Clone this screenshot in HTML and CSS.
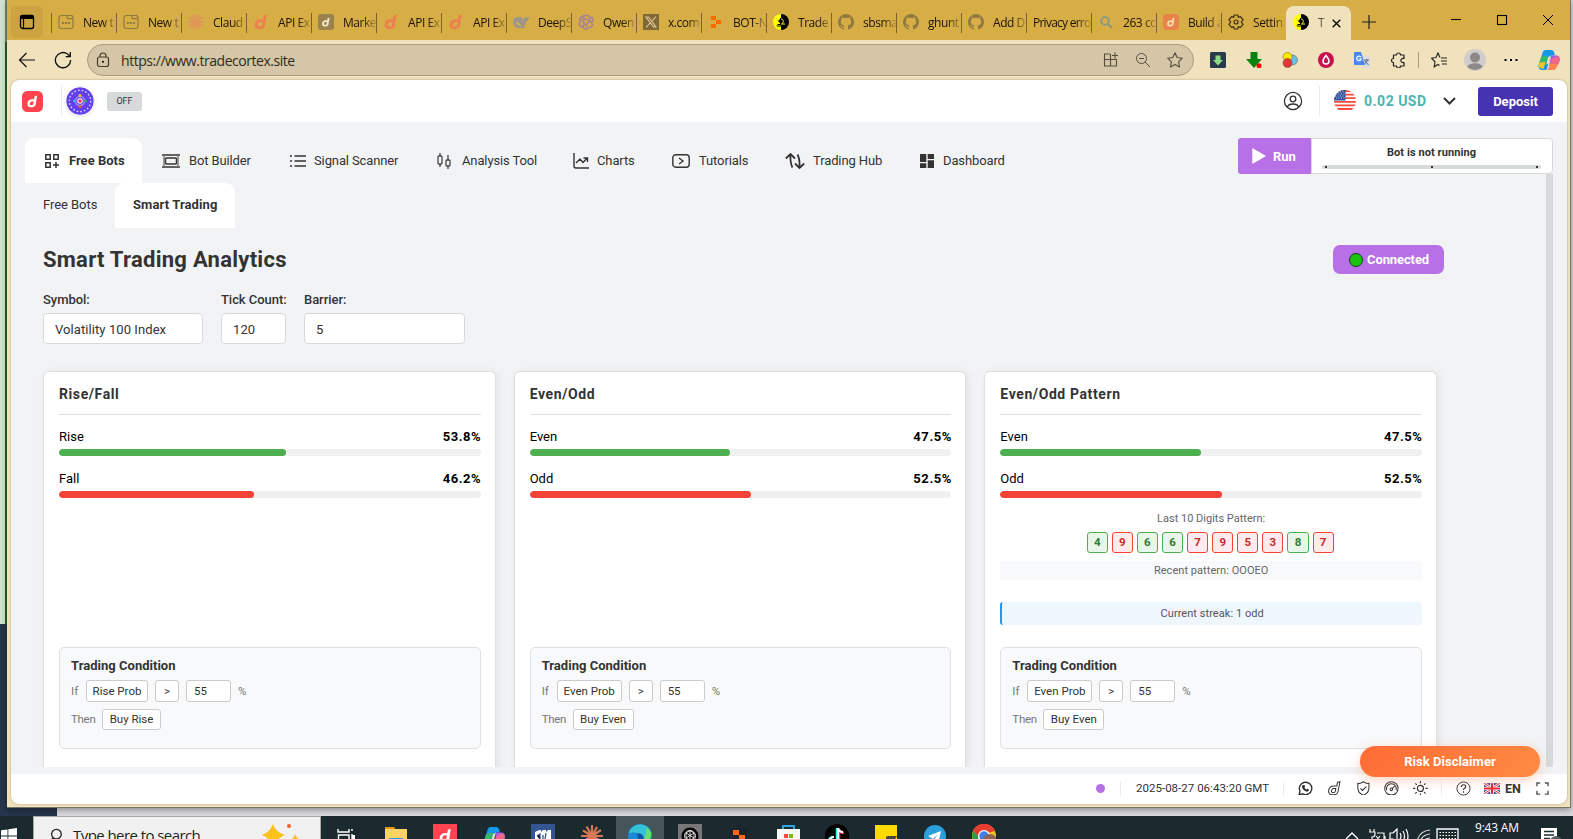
FILE: index.html
```html
<!DOCTYPE html>
<html lang="en">
<head>
<meta charset="utf-8">
<title>Smart Trading Analytics</title>
<link rel="stylesheet" href="styles.css">
</head>
<body>
<svg class="sprite" aria-hidden="true">
  <symbol id="deriv" viewBox="0 0 16 16"><path d="M13.6 1 10.6 1.6 10 5.2H7.4C4.4 5.2 2.2 7.2 1.8 10c-.4 2.800 1 5 3.500 5h2.300c2.400 0 4.100-1.400 4.500-3.800zM9 11c-.2 1-.7 1.400-1.600 1.400H6.100c-1 0-1.500-.8-1.300-2 .2-1.300 1-2.300 2.200-2.300h2.500z"/></symbol>
  <symbol id="page" viewBox="0 0 16 16"><path fill="none" stroke="currentColor" stroke-width="1.2" d="M4 1.500h8.500A2.200 2.200 0 0 1 15 3.800v8.400a2.200 2.200 0 0 1-2.300 2.300H3.300A2.200 2.200 0 0 1 1 12.200V3.800a2.200 2.200 0 0 1 2.200-2.300zM9 1.500v2q0 1.200 1.200 1.200H15"/><path fill="currentColor" d="M4 8h2v2H4zm3 0h2v2H7zm3 0h2v2h-2z"/></symbol>
  <symbol id="burst" viewBox="0 0 24 24"><path stroke="currentColor" stroke-width="2.400" stroke-linecap="round" d="M12 12V1M12 12l5-9M12 12l9-6M12 12l11 0M12 12l9 5M12 12l5 9M12 12v11M12 12l-5.500 9M12 12l-9 5.500M12 12H1M12 12 3 6.500M12 12 6.500 2.500"/></symbol>
  <symbol id="github" viewBox="0 0 16 16"><path fill="currentColor" d="M8 0a8 8 0 0 0-2.530 15.590c.4.070.55-.17.55-.38v-1.490c-2.230.48-2.700-.94-2.700-.94-.36-.92-.89-1.170-.89-1.170-.73-.5.050-.49.050-.49.810.06 1.230.83 1.230.83.72 1.230 1.880.87 2.340.67.070-.52.280-.88.510-1.080-1.780-.2-3.640-.89-3.640-3.950 0-.87.310-1.590.82-2.150-.08-.2-.36-1.020.08-2.120 0 0 .67-.21 2.200.82a7.600 7.600 0 0 1 4 0c1.530-1.040 2.200-.82 2.200-.82.440 1.100.160 1.920.08 2.120.510.56.820 1.270.820 2.150 0 3.070-1.870 3.750-3.650 3.950.290.250.540.730.540 1.480v2.190c0 .210.150.460.550.380A8 8 0 0 0 8 0z"/></symbol>
  <symbol id="cortex" viewBox="0 0 16 16"><path fill="#ff0" d="M8 0a8 8 0 0 0 0 16z"/><path d="M8 0a8 8 0 0 1 0 16z"/><path d="M7 4h1v7H4.500v-1H7zM3.500 11.500H8v1H4zM5 7l2-2v4z"/><path fill="none" stroke="#ff0" d="M8 5c3 0 3 4 .5 5H12"/></symbol>
  <symbol id="copilot" viewBox="0 0 24 24"><path fill="#1597e8" d="M8 1h6.500c2 0 2.600 1.300 3.200 3l.8 3h-4L12 14l-2 7c-.5 1.600-1.500 2-3 2H5c-4 0-5-3-4-6L5 4c.6-2 1.400-3 3-3z"/><path fill="#35b86c" d="M3.500 9 7 7.500h4L8 18l-7.500.5c0-2 2-7 3-9.500z"/><path fill="#f7c325" d="m1 15 7-1-2 8-3-1c-2-1-2.500-3-2-6z"/><path fill="#a65be8" d="M14.500 7H20c3.500 0 4.500 3 3.500 6L20 20c-.7 2-2 3-4 3H9c1.500 0 2.300-1 2.800-2.500z"/><path fill="#f4658a" d="M20.500 8c3 .5 3.800 3 2.800 6l-1.200 3h-9L15 11z"/><path fill="#ff8a4a" d="m13 16 9 1-2 3c-.7 2-2 3-4 3H9c1.500 0 2.300-1 2.800-2.500z"/><path fill="#f1e2bd" d="m11 9 3-2-2.500 9-2.500 1z"/></symbol>
  <symbol id="uk" viewBox="0 0 30 20"><path fill="#2f3f96" d="M0 0h30v20H0z"/><path stroke="#fff" stroke-width="5" d="m0 0 30 20M30 0 0 20"/><path stroke="#e8404f" stroke-width="2" d="m0 0 30 20M30 0 0 20"/><path stroke="#fff" stroke-width="7" d="M15 0v20M0 10h30"/><path stroke="#e02b3c" stroke-width="4" d="M15 0v20M0 10h30"/></symbol>
</svg>

<div class="desktop">
  <div class="backdrop"></div>
  <div class="window">
    <div class="tabstrip">
      <div class="workspace"><svg width="16" height="16" viewBox="0 0 16 16"><rect x="1.500" y="1.500" width="13" height="13" rx="2" fill="none" stroke="#000" stroke-width="1.300"/><path d="M1 3q0-2 2-2h10q2 0 2 2v2H1z"/><path d="M4.500 5v9.500" stroke="#000" stroke-width="1.200"/></svg></div>
      <div class="tab"><svg class="fav olive"><use href="#page"/></svg><span>New t</span></div>
      <div class="tab"><svg class="fav olive"><use href="#page"/></svg><span>New t</span></div>
      <div class="tab"><svg class="fav peach"><use href="#burst"/></svg><span>Claud</span></div>
      <div class="tab"><svg class="fav coral"><use href="#deriv"/></svg><span>API Ex</span></div>
      <div class="tab"><svg class="fav" viewBox="0 0 16 16"><rect width="16" height="16" rx="3" fill="#99824b"/><use href="#deriv" x="3" y="3" width="10" height="10" fill="#f5e8cb"/></svg><span>Marke</span></div>
      <div class="tab"><svg class="fav coral"><use href="#deriv"/></svg><span>API Ex</span></div>
      <div class="tab"><svg class="fav coral"><use href="#deriv"/></svg><span>API Ex</span></div>
      <div class="tab"><svg class="fav" viewBox="0 0 16 16"><path fill="#9c948d" d="M0 8c0-4 3-5.500 6-5 2-1 3 1 5 3 .3-1 1-2 .3-3.500C13 4 14 4 16 3c0 3-1 4-3 4.500-.5 3-1.500 4-2.500 5l2 1c-2 1-4 .5-5 .5C3 14 0 12 0 8z"/><path fill="#d8ad47" d="M3 8c3 0 4 2 6 4-3 0-5-1-6-4zm5-2q2 0 2 2L8 7z"/></svg><span>DeepS</span></div>
      <div class="tab"><svg class="fav" viewBox="0 0 16 16"><path fill="none" stroke="#a98393" stroke-width="1.600" d="M5 1.500h5.500l1 2H14L15 6l-1.500 2.500L14.500 11 13 13.500h-2.500L9 15H6.500L5 12.500H2.500L1 10l1.500-2.500L1.500 5 3 3h2.500zM4 5.500h8L8 12zM5 2l2 3.500M14 8l-3-.5M5 12.500 6 9"/></svg><span>Qwen</span></div>
      <div class="tab"><svg class="fav" viewBox="0 0 16 16"><path fill="#806936" d="M0 0h16v16H0z"/><path fill="none" stroke="#e5cf99" stroke-width="1.100" d="M3 3h2.500L13 13h-2.500zM13 2.500 9 7M7 9l-4 4.500"/></svg><span>x.com</span></div>
      <div class="tab"><svg class="fav" viewBox="0 0 16 16"><path fill="#ff6a00" d="M3 2h5v4H3zm5 4h5v4H8zM3 10h5v4H3z"/></svg><span>BOT-N</span></div>
      <div class="tab"><svg class="fav"><use href="#cortex"/></svg><span>Trade</span></div>
      <div class="tab"><svg class="fav olive"><use href="#github"/></svg><span>sbsma</span></div>
      <div class="tab"><svg class="fav olive"><use href="#github"/></svg><span>ghunt</span></div>
      <div class="tab"><svg class="fav olive"><use href="#github"/></svg><span>Add D</span></div>
      <div class="tab bare"><span>Privacy erro</span></div>
      <div class="tab"><svg class="fav" viewBox="0 0 16 16"><circle cx="7" cy="7" r="3.800" fill="none" stroke="#7e9b84" stroke-width="1.800"/><path d="m10 10 4 4" stroke="#7e9b84" stroke-width="2"/></svg><span>263 cc</span></div>
      <div class="tab"><svg class="fav" viewBox="0 0 16 16"><rect width="16" height="16" rx="4" fill="#e98349"/><use href="#deriv" x="3" y="3" width="10" height="10" fill="#f6dcae"/></svg><span>Build a</span></div>
      <div class="tab"><svg class="fav" viewBox="0 0 16 16"><path fill="none" stroke="#3a2f12" stroke-width="1.200" d="M6.300 1h3.400l.6 2.200 2.200-.6L15 5.500 13.400 8 15 10.500l-2.500 2.900-2.200-.6-.6 2.200H6.300l-.6-2.200-2.200.6L1 10.500 2.600 8 1 5.500l2.500-2.900 2.200.6z"/><circle cx="8" cy="8" r="2" fill="none" stroke="#3a2f12" stroke-width="1.200"/></svg><span>Settin</span></div>
      <div class="tab current"><svg class="fav"><use href="#cortex"/></svg><span>T</span><svg class="close" viewBox="0 0 9 9"><path d="m.7.7 7.600 7.600m0-7.600L.7 8.300" stroke="#000" stroke-width="1.300"/></svg></div>
      <svg class="plus" viewBox="0 0 14 14"><path d="M7 0v14M0 7h14" stroke="#222" stroke-width="1.200"/></svg>
      <div class="winctl">
        <svg viewBox="0 0 12 12"><path d="M1 5.500h10" stroke="#000" stroke-width="1.100"/></svg>
        <svg viewBox="0 0 12 12"><rect x="1.500" y="1.500" width="9" height="9" fill="none" stroke="#000" stroke-width="1.100"/></svg>
        <svg viewBox="0 0 12 12"><path d="m1 1 10 10M11 1 1 11" stroke="#000"/></svg>
      </div>
    </div>

    <div class="toolbar">
      <svg class="back" viewBox="0 0 18 16"><path fill="none" stroke="#111" stroke-width="1.200" d="M17 8H1.500M8.500 1l-7 7 7 7"/></svg>
      <svg class="reload" viewBox="0 0 18 18"><path fill="none" stroke="#111" stroke-width="1.300" d="M16.600 9A7.600 7.600 0 1 1 13.500 3l2.500 2.300M16.300 1v4.700h-4.600"/></svg>
      <div class="url">
        <svg class="lock" viewBox="0 0 14 16"><rect x="1.500" y="5" width="11" height="9.500" rx="2" fill="none" stroke="#443c2d" stroke-width="1.200"/><path fill="none" stroke="#443c2d" stroke-width="1.200" d="M4 5V4q0-3 3-3t3 3v1"/><circle cx="7" cy="9.700" r="1"/></svg>
        <span class="address">https://www.tradecortex.site</span>
        <svg viewBox="0 0 16 16"><path fill="none" stroke="#554d3d" stroke-width="1.100" d="M7 2H1.500v5.500H13.500V14H1.500V8M7.500 2v12M12 .500v6M9 3.500h6"/></svg>
        <svg viewBox="0 0 16 16"><circle cx="6.500" cy="6.500" r="5" fill="none" stroke="#554d3d"/><path fill="none" stroke="#554d3d" d="m10 10 5 5M4 6.500h5"/></svg>
        <svg viewBox="0 0 16 16"><path fill="none" stroke="#554d3d" stroke-width="1.100" stroke-linejoin="round" d="m8 .8 2.200 4.700 5.100.7-3.700 3.600.9 5.100L8 12.500l-4.500 2.400.9-5.100L.7 6.200l5.100-.7z"/></svg>
      </div>
      <div class="exts">
        <svg viewBox="0 0 16 16"><rect width="16" height="16" rx="1.500" fill="#273b4d"/><path fill="#8fdc86" d="M5.500 3.500h5V8H13l-5 5.500L3 8h2.500z"/></svg>
        <svg viewBox="0 0 16 16"><path fill="#0b8210" d="M4.500 0h7v7H16l-8 9-8-9h4.500z"/><circle cx="13" cy="13.700" r="2.500" fill="red"/></svg>
        <svg viewBox="0 0 16 16"><circle cx="10.500" cy="8" r="5" fill="#64c1ef" stroke="#6b6b6b" stroke-width=".6"/><circle cx="5.500" cy="5" r="4.500" fill="#ffec00" stroke="#8a6d1c" stroke-width=".6"/><circle cx="5.500" cy="11" r="4.500" fill="#e0363c" stroke="#7c4a2c" stroke-width=".6"/></svg>
        <svg viewBox="0 0 16 16"><circle cx="8" cy="8" r="8" fill="#c8124d"/><path fill="none" stroke="#fff" stroke-width="1.500" d="M8 3.500c2 2.500 3 4 3 5.500a3 3 0 0 1-6 0c0-1.500 1-3 3-5.500z"/></svg>
        <svg viewBox="0 0 16 16"><path fill="#dcdcdc" d="M6 4h9q1 0 1 1v10q0 1-1 1H9z"/><path fill="#4a86f0" d="M1 0h6l4 13H1q-1 0-1-1V1q0-1 1-1z"/><path fill="none" stroke="#fff" stroke-width="1.200" d="M7 5.300A2.300 2.300 0 1 0 7.200 7H5"/><path fill="none" stroke="#5b6d80" d="M10 8h5m-2.500-1v1M11 9l3.500 4M14 8l-3.500 4"/></svg>
        <svg viewBox="0 0 16 16"><path fill="none" stroke="#222" stroke-width="1.200" stroke-linejoin="round" d="M4 3h2.500a2 2 0 1 1 4 0H14v3.500a2.200 2.200 0 1 0 0 4V14h-3.500a2 2 0 0 1-4 0H3.500v-3.500a2 2 0 1 1 0-4V3z"/></svg>
        <i class="bar"></i>
        <svg viewBox="0 0 16 16"><path fill="none" stroke="#222" stroke-width="1.100" d="M9 5.500 7 1 5 5.500.5 6.200 4 9.800l-.8 5L7 12.500l1.500 1M10 6h6m-6 3h6m-5 3h5"/></svg>
        <svg class="avatar" viewBox="0 0 22 22"><circle cx="11" cy="11" r="11" fill="#cfcccb"/><circle cx="11" cy="8.500" r="5" fill="#8c8988"/><path fill="#8c8988" d="M3.500 18c1-5 14-5 15 0a11 11 0 0 1-15 0z"/></svg>
        <svg viewBox="0 0 16 16"><path d="M1.500 7h2v2h-2zm5.500 0h2v2H7zm5.500 0h2v2h-2z"/></svg>
        <svg class="copilot"><use href="#copilot"/></svg>
      </div>
    </div>

    <div class="page">
      <header class="header">
        <svg class="brand" viewBox="0 0 21 21"><rect width="21" height="21" rx="5.500" fill="#ff444f"/><use href="#deriv" x="4" y="4" width="13" height="13" fill="#fff"/></svg>
        <i class="vline"></i>
        <svg class="emblem" viewBox="0 0 28 28"><circle cx="14" cy="14" r="13.700" fill="#6340ee"/><circle cx="14" cy="14" r="10.700" fill="none" stroke="#d9d0ff" stroke-width="1.400" stroke-dasharray="1.600 2.100"/><circle cx="14" cy="14" r="4.500" fill="none" stroke="#a48cff" stroke-width="1.500"/><circle cx="14" cy="14" r="2.700" fill="#fff"/><circle cx="14" cy="14" r="1.700" fill="#ee2457"/><circle cx="14" cy="8.500" r="1.500" fill="#f6c21c"/><circle cx="14" cy="19.500" r="1.500" fill="#ee5a3a"/><circle cx="8.500" cy="14" r="1.400" fill="#33b6f3"/><circle cx="19.500" cy="14" r="1.400" fill="#41a85f"/></svg>
        <span class="off">OFF</span>
        <div class="account">
          <svg class="user" viewBox="0 0 20 20"><g fill="none" stroke="#333" stroke-width="1.300"><circle cx="10" cy="10" r="8.600"/><circle cx="10" cy="8" r="2.800"/><path d="M4.300 16c1.500-4 9.900-4 11.400 0"/></g></svg>
          <i class="vline"></i>
          <svg class="usflag" viewBox="0 0 22 22"><clipPath id="round"><circle cx="11" cy="11" r="11"/></clipPath><g clip-path="url(#round)"><path fill="#fff" d="M0 0h22v22H0z"/><path stroke="#fa4a3b" stroke-width="1.800" d="M0 1h22M0 4.600h22M0 8.200h22M0 11.800h22M0 15.400h22M0 19h22"/><path fill="#31529c" d="M0 0h11.500v10.500H0z"/><path stroke="#c9d3ea" stroke-dasharray="1 1.500" d="M1 2h10M2 4h9M1 6h10M2 8h9"/></g></svg>
          <span class="balance">0.02 USD</span>
          <svg class="chev" viewBox="0 0 13 8"><path fill="none" stroke="#333" stroke-width="2" d="m1 1 5.500 5.500L12 1"/></svg>
          <button class="deposit">Deposit</button>
        </div>
      </header>

      <main class="main">
        <div class="navrow">
          <nav class="nav">
            <a class="active"><svg viewBox="0 0 14 14"><g fill="none" stroke="#333" stroke-width="1.500"><path d="M.8.800h4.400v4.400H.8zM8.800.800h4.400v4.400H8.800zM.8 8.800h4.400v4.400H.8zM11 8v6M8 11h6"/></g></svg><b>Free Bots</b></a>
            <a><svg viewBox="0 0 18 14"><path fill="none" stroke="#333" stroke-width="1.500" d="M0 1h18M0 13h18M4.500 4h9q1 0 1 1v4q0 1-1 1h-9q-1 0-1-1V5q0-1 1-1z"/><path stroke="#777" stroke-width="1.500" d="M2 1v12M16 1v12"/></svg><b>Bot Builder</b></a>
            <a><svg viewBox="0 0 16 14"><path stroke="#333" stroke-width="1.500" d="M4.500 2H16M4.500 7H16M4.500 12H16M0 2h2M0 7h2M0 12h2"/></svg><b>Signal Scanner</b></a>
            <a><svg viewBox="0 0 14 16"><path fill="none" stroke="#444" stroke-width="1.300" d="M3 0v3m0 8v3M1 4q0-1 1-1h2q1 0 1 1v6q0 1-1 1H2q-1 0-1-1zM11 2v5m0 6v3M9 8q0-1 1-1h2q1 0 1 1v4q0 1-1 1h-2q-1 0-1-1z"/></svg><b>Analysis Tool</b></a>
            <a><svg viewBox="0 0 16 16"><path fill="none" stroke="#333" stroke-width="1.400" d="M1 0v13q0 2 2 2h13M3 10l4-4 3 3.500L14.300 5M10.500 5h4v4"/></svg><b>Charts</b></a>
            <a><svg viewBox="0 0 18 14"><rect x=".8" y=".8" width="16.400" height="12.400" rx="3" fill="none" stroke="#333" stroke-width="1.400"/><path fill="none" stroke="#333" stroke-width="1.400" d="m7 4 4 3-4 3"/></svg><b>Tutorials</b></a>
            <a><svg viewBox="0 0 20 16"><path fill="none" stroke="#333" stroke-width="1.800" d="M7.500 14.500Q5 10 5.500 1M.8 5.500 5.500 1 10 5.500M12.500 1.500Q15 6 14.500 15M10 10.500l4.500 4.500 4.700-4.500"/></svg><b>Trading Hub</b></a>
            <a><svg viewBox="0 0 14 14"><path fill="#333" d="M0 0h6.300v8H0zM7.700 0H14v5H7.700zM0 9.300h6.300V14H0zM7.700 6.300H14V14H7.700z"/></svg><b>Dashboard</b></a>
          </nav>
          <div class="runner">
            <button class="run"><svg viewBox="0 0 14 16"><path fill="#fff" stroke="#fff" stroke-linejoin="round" d="M.8.800 13.200 8 .8 15.200z"/></svg><b>Run</b></button>
            <div class="status"><b>Bot is not running</b><div class="steps"><i></i><i></i><i></i></div></div>
          </div>
        </div>

        <div class="content">
          <div class="sheet">
            <div class="subtabs"><a>Free Bots</a><a class="on">Smart Trading</a></div>
            <div class="titlebar"><h1>Smart Trading Analytics</h1><span class="connected"><i></i><b>Connected</b></span></div>
            <div class="fields">
              <label><span>Symbol:</span><em>Volatility 100 Index</em></label>
              <label><span class="tick">Tick Count:</span><em>120</em></label>
              <label><span>Barrier:</span><em>5</em></label>
            </div>
            <div class="cards">
              <section class="card">
                <h2>Rise/Fall</h2>
                <div class="stat"><span>Rise</span><b>53.8%</b></div><div class="track"><i class="up" style="width:53.8%"></i></div>
                <div class="stat"><span>Fall</span><b>46.2%</b></div><div class="track"><i class="down" style="width:46.2%"></i></div>
                <div class="cond">
                  <h3>Trading Condition</h3>
                  <div class="rule"><span class="if">If</span><em class="rise">Rise Prob</em><em class="gt">&gt;</em><em class="num">55</em><span>%</span></div>
                  <div class="rule then"><span class="th">Then</span><em class="rise">Buy Rise</em></div>
                </div>
              </section>
              <section class="card">
                <h2>Even/Odd</h2>
                <div class="stat"><span>Even</span><b>47.5%</b></div><div class="track"><i class="up" style="width:47.5%"></i></div>
                <div class="stat"><span>Odd</span><b>52.5%</b></div><div class="track"><i class="down" style="width:52.5%"></i></div>
                <div class="cond">
                  <h3>Trading Condition</h3>
                  <div class="rule"><span class="if">If</span><em class="even">Even Prob</em><em class="gt">&gt;</em><em class="num">55</em><span>%</span></div>
                  <div class="rule then"><span class="th">Then</span><em class="even">Buy Even</em></div>
                </div>
              </section>
              <section class="card">
                <h2>Even/Odd Pattern</h2>
                <div class="stat"><span>Even</span><b>47.5%</b></div><div class="track"><i class="up" style="width:47.5%"></i></div>
                <div class="stat"><span>Odd</span><b>52.5%</b></div><div class="track"><i class="down" style="width:52.5%"></i></div>
                <p class="caption">Last 10 Digits Pattern:</p>
                <div class="digits"><b class="e">4</b><b>9</b><b class="e">6</b><b class="e">6</b><b>7</b><b>9</b><b>5</b><b>3</b><b class="e">8</b><b>7</b></div>
                <p class="recent">Recent pattern: OOOEO</p>
                <p class="streak">Current streak: 1 odd</p>
                <div class="cond">
                  <h3>Trading Condition</h3>
                  <div class="rule"><span class="if">If</span><em class="even">Even Prob</em><em class="gt">&gt;</em><em class="num">55</em><span>%</span></div>
                  <div class="rule then"><span class="th">Then</span><em class="even">Buy Even</em></div>
                </div>
              </section>
            </div>
          </div>
          <div class="scrollbar"></div>
        </div>
      </main>

      <footer class="footer">
        <i class="dot"></i><i class="vline"></i>
        <span class="time">2025-08-27 06:43:20 GMT</span><i class="vline"></i>
        <div class="tools">
          <svg viewBox="0 0 16 16"><path fill="none" stroke="#333" stroke-width="1.500" d="M1.200 14.800 2.200 11A6.700 6.700 0 1 1 5 13.900z"/><path fill="#333" d="M5.500 4.300 7 4.200l.7 1.900-.7.900q.7 1.500 2.100 2.100l.9-.8 1.900.9q0 2-2 2.300C7 11.500 4 8 4.300 6q.2-1.300 1.200-1.700z"/></svg>
          <svg viewBox="0 0 16 16"><path fill="none" stroke="#333" stroke-width="1.100" d="m14 .8-2.600.5-.8 4H7.400C4.400 5.300 2.200 7.200 1.800 10c-.4 2.800 1 4.800 3.500 4.800h2.300c2.400 0 4-1.400 4.400-3.700zM9 11c-.2 1-.7 1.400-1.600 1.400H6.100c-1 0-1.500-.8-1.300-2 .2-1.300 1-2.300 2.200-2.300h2.500z"/></svg>
          <svg viewBox="0 0 16 16"><path fill="none" stroke="#333" stroke-width="1.100" d="M8 .8q3 2.200 6 1.700v5Q14 13 8 15.300 2 13 2 7.500v-5q3 .5 6-1.700zM4.800 8l2.200 2.200L11.300 6"/></svg>
          <svg viewBox="0 0 16 16"><g fill="none" stroke="#333" stroke-width="1.100"><circle cx="8" cy="8" r="7.200"/><path d="M3 10a5.300 5.300 0 1 1 10 0"/><circle cx="8" cy="9" r="1.400"/><path d="m9 8 2.500-2.500"/></g></svg>
          <svg viewBox="0 0 16 16"><circle cx="8" cy="8" r="3.300" fill="none" stroke="#333" stroke-width="1.200"/><path stroke="#333" stroke-width="1.200" d="M8 0v2.500M8 13.500V16M0 8h2.500M13.500 8H16M2.500 2.500l1.600 1.600M12 12l1.600 1.600M13.500 2.500 12 4.100M4 12l-1.600 1.600"/></svg>
        </div>
        <i class="vline"></i>
        <svg class="help" viewBox="0 0 16 16"><circle cx="8" cy="8" r="7" fill="none" stroke="#333"/><path fill="none" stroke="#333" stroke-width="1.200" d="M5.700 6.300Q5.700 4 8 4t2.300 2q0 1-1.200 1.800Q8 8.500 8 9.700M8 11v1.400"/></svg>
        <svg class="gb"><use href="#uk"/></svg><b class="lang">EN</b>
        <svg class="full" viewBox="0 0 14 14"><path fill="none" stroke="#555" stroke-width="1.500" d="M1 4.500V1h3.500M9.500 1H13v3.500M13 9.500V13H9.500M4.500 13H1V9.500"/></svg>
      </footer>
      <div class="risk">Risk Disclaimer</div>
    </div>
  </div>

  <div class="taskbar">
    <svg class="start" viewBox="0 0 16 16"><path fill="#fff" d="M0 2.300 6.500 1.400v6.200H0zM7.300 1.300 16 0v7.600H7.300zM0 8.400h6.500v6.200L0 13.700zM7.300 8.400H16V16l-8.700-1.200z"/></svg>
    <div class="search">
      <svg class="lens" viewBox="0 0 14 16"><circle cx="8" cy="6" r="5.200" fill="none" stroke="#222" stroke-width="1.400"/><path d="M4.500 10 0 15" stroke="#222" stroke-width="1.400"/></svg>
      <span>Type here to search</span>
      <svg class="spark" viewBox="0 0 42 18"><path fill="#fbc21c" d="M12 1q2.500 8 12 11-8 3-12 12Q9 15 1 12q8-3 11-11z"/><path fill="#fbc21c" d="M34 11q1 4 6 6-5 1-6 5-1-4-5-5 4-2 5-6z"/><circle cx="28" cy="3" r="2" fill="#f0602b"/></svg>
    </div>
    <div class="apps">
      <svg viewBox="0 0 24 24"><path fill="none" stroke="#fff" stroke-width="1.400" d="M4 5v3h11V5M4.500 11H15v6H4.500zM4 22v-2h11v2M18 5v2m0 3v12"/><path fill="#fff" d="M18 11h3v4h-3z"/></svg>
      <svg viewBox="0 0 24 24"><path fill="#dc9a16" d="M1 3h9l2 3H1z"/><path fill="#fbd264" d="M1 5h22v16H1z"/><path fill="#3f97dc" d="M5 14h14v8H5z"/></svg>
      <svg viewBox="0 0 24 24"><path fill="#ff444f" d="M0 0h24v24H0z"/><use href="#deriv" x="5" y="3" width="15" height="17" fill="#fff"/></svg>
      <svg viewBox="0 0 24 24"><use href="#copilot" x="1" y="2" width="22" height="22"/></svg>
      <svg viewBox="0 0 24 24"><path fill="#355492" d="M0 0h24v24H0z"/><path fill="#fff" d="M4 8q3-2 6-2v2l2-2h3v2l2-2h3v18H4z"/><path stroke="#355492" stroke-width="1.300" d="M6 12l3-2v6m3-5v4m3-6-1 6"/></svg>
      <svg viewBox="0 0 24 24"><use href="#burst" x="1" y="1" width="22" height="22" color="#d97757"/></svg>
      <span class="running"><svg viewBox="0 0 24 24"><circle cx="12" cy="12" r="12" fill="#1b87d8"/><path fill="#34c2d6" d="M1 9C3-1 19-3 23 8c2 6-3 9-8 9 2-4-2-8-6-8-4-1-6 0-8 0z"/><path fill="#6bdf64" d="M18 3c6 4 7 11 2 13-2 1-4 1-5 1 3-5 4-9 3-14z"/><path fill="#0e57a3" d="M9 10c4-2 8 2 6 6l-4 1z"/></svg></span>
      <svg viewBox="0 0 24 24"><path fill="#777" d="M0 0h24v24H0z"/><circle cx="12" cy="12" r="8.500" fill="#050505"/><g fill="none" stroke="#fff" stroke-width=".8"><circle cx="12" cy="12" r="5.500"/><path d="m8 9 4-2.500L16 9v5l-4 2.500L8 14zM8 9l8 5M16 9l-8 5M12 6v11"/></g></svg>
      <svg viewBox="0 0 24 24"><path fill="#1b2230" d="M2 4h19v20H2z"/><path fill="#ff6a13" d="M6 6h6v5H6zm6 5h6v5h-6z"/></svg>
      <svg viewBox="0 0 24 24"><path fill="none" stroke="#27a6e8" stroke-width="2" d="M7 6V2h11v4"/><path fill="#f7f7f7" d="M1 5h23v19H1z"/><path fill="#f25022" d="M8 10h4v4H8z"/><path fill="#7fba00" d="M13 10h4v4h-4z"/></svg>
      <svg viewBox="0 0 24 24"><circle cx="12" cy="12" r="12"/><path fill="none" stroke="#25f4ee" stroke-width="2.500" d="M12 4v13a4 4 0 1 1-4-4"/><path fill="none" stroke="#fe2c55" stroke-width="2.500" d="M14 5v13M14 5q1 4 5 4"/><path fill="none" stroke="#fff" stroke-width="2.200" d="M13 4v13a4 4 0 1 1-4-4M13 4q1 4 5 4"/></svg>
      <svg viewBox="0 0 24 24"><path fill="#ffd900" d="M1 1h22v22H1z"/><path fill="#444" d="M12 14q0-2 2-2h9l-6 9h-5z"/></svg>
      <svg viewBox="0 0 24 24"><circle cx="12" cy="12" r="11" fill="#2ba0dd"/><path fill="#fff" d="m5 12 13-5-3 13-4-4 4-6-5 5z"/></svg>
      <svg viewBox="0 0 24 24"><circle cx="12" cy="12" r="12" fill="#f2c224"/><path fill="#e63d30" d="M1 7A12 12 0 0 1 23 7l-11 3-5 4z"/><path fill="#2e9e4c" d="M1 7l7 7v9C0 20-1 12 1 7z"/><circle cx="12" cy="12" r="6" fill="#fff"/><circle cx="12" cy="12" r="4.700" fill="#3e7ee8"/><circle cx="18" cy="17" r="7" fill="#8d6557"/></svg>
    </div>
    <div class="tray">
      <svg viewBox="0 0 24 16"><path fill="none" stroke="#fff" stroke-width="1.400" d="m6 11 6-6 6 6"/></svg>
      <svg viewBox="0 0 24 16"><path fill="none" stroke="#eee" stroke-width="1.200" d="M6 1v3m4-3v3M5 4h6v2q0 3-3 3v5M13 5h7v9H10M21 8v3M12 8l4 5m0-5-4 5"/></svg>
      <svg viewBox="0 0 24 16"><path fill="none" stroke="#fff" stroke-width="1.200" d="M5 5H2v6h3l4 4V1L5 5M12 5q2 3 0 6m3-8q3 5 0 10m3-12q4 7 0 14"/></svg>
      <svg viewBox="0 0 24 16"><path fill="none" stroke="#ddd" stroke-width="1.200" d="M5 14Q7 3 18 2M8 15Q9 7 18 6M12 15q0-5 6-5M15 15q0-2 3-2"/></svg>
      <svg viewBox="0 0 24 16"><path fill="none" stroke="#fff" stroke-width="1.300" d="M1 1h21v14H1z"/><path stroke="#fff" stroke-dasharray="1.500 1.500" d="M3.500 4.500h17M3.500 7.500h17M3.500 10.500h17"/></svg>
      <span class="clock">9:43 AM</span>
      <svg class="notice" viewBox="0 0 22 16"><path fill="#fff" d="M1 0h16v16H1z"/><path stroke="#1c2b30" stroke-width="1.300" d="M4 3.500h10M4 7h10M4 10.500h6"/><circle cx="16" cy="14" r="6" fill="#555f63"/></svg>
    </div>
  </div>
</div>
</body>
</html>
```

FILE: styles.css
```css
* { box-sizing: border-box; }
body { margin: 0; width: 1573px; height: 839px; overflow: hidden; font-family: Roboto, "Liberation Sans", sans-serif; font-size: 13px; color: #333; }
svg { display: block; flex: none; }
i, em { font-style: normal; }
h1, h2, h3, p { margin: 0; }
button { border: 0; padding: 0; font: inherit; }
.sprite { position: absolute; width: 0; height: 0; }

.desktop { position: relative; height: 839px; background: #d9d9dc; display: flex; flex-direction: column; }
.backdrop { position: absolute; left: 0; top: 0; width: 57px; height: 816px; background: linear-gradient(#cfe4cd, #cfe4cd) 0 0 / 5px 624px no-repeat, linear-gradient(#6d8878 42px, #2c5c2f 42px) 5px 0 / 2px 624px no-repeat, #26354a; }
.window { position: relative; width: 1564px; height: 808px; margin: 0 0 8px 7px; background: #f0e2bc; border-right: 1px solid #77736b; border-bottom: 1px solid #77736b; box-shadow: 0 2px 6px rgba(0,0,0,.35); }

.tabstrip { display: flex; height: 40px; background: #d7ad46; font: 12px "Open Sans", "Noto Sans", sans-serif; letter-spacing: -.45px; color: #1c1505; padding-left: 4px; }
.workspace { width: 32px; height: 32px; margin: 6px 8px 0 0; border-radius: 5px; background: #cba341; display: grid; place-items: center; }
.tab { position: relative; flex: none; width: 65px; height: 40px; padding: 4px 0 0 7px; display: flex; align-items: center; }
.tab::before { content: ""; position: absolute; left: 0; top: 13px; height: 20px; width: 1px; background: #7c642a; }
.tab span { flex: none; width: 33px; margin-left: 9px; white-space: nowrap; -webkit-mask-image: linear-gradient(90deg, #000 60%, rgba(0,0,0,.15)); mask-image: linear-gradient(90deg, #000 60%, rgba(0,0,0,.15)); }
.tab.bare span { width: 58px; margin-left: 0; letter-spacing: -.75px; -webkit-mask-image: linear-gradient(90deg, #000 75%, rgba(0,0,0,.15)); mask-image: linear-gradient(90deg, #000 75%, rgba(0,0,0,.15)); }
.fav { width: 16px; height: 16px; }
.olive { color: #917a40; }
.peach { color: #e0945a; }
.coral { fill: #ec8050; }
.tab.current { height: 34px; margin-top: 6px; padding-top: 0; padding-bottom: 2px; background: #f0e2bc; border-radius: 8px 8px 0 0; }
.tab.current::before { display: none; }
.tab.current span { flex: none; width: 8px; margin-left: 9px; opacity: .7; }
.close { width: 9px; height: 9px; margin: 2px 0 0 6px; }
.plus { width: 14px; height: 14px; margin: 15px 0 0 11px; }
.winctl { display: flex; gap: 34px; margin: 14px 0 0 74px; }
.winctl svg { width: 12px; height: 12px; }

.toolbar { display: flex; align-items: center; height: 40px; padding-left: 11px; }
.back { width: 18px; height: 16px; }
.reload { width: 18px; height: 18px; margin-left: 18px; }
.url { display: flex; align-items: center; gap: 16px; width: 1107px; height: 32px; margin-left: 15px; padding: 0 10px 0 8px; border: 1px solid #ac9c80; border-radius: 16px; background: #d4c6a6; }
.url svg { width: 16px; height: 16px; }
.url .lock { width: 14px; }
.address { flex: 1; margin-left: -5px; font: 14px "Open Sans", "Noto Sans", sans-serif; letter-spacing: -.46px; color: #302b20; }
.exts { display: flex; align-items: center; gap: 20px; margin-left: 16px; }
.exts svg { width: 16px; height: 16px; }
.exts .bar { width: 1px; height: 16px; margin: 0 -8px; background: #a99c80; }
.exts .avatar { width: 22px; height: 22px; margin: 0 -3px; }
.exts .copilot { width: 22px; height: 22px; margin-left: -1px; }

.page { position: relative; margin-left: 4px; width: 1556px; height: 724px; background: #fff; border-radius: 8px; overflow: hidden; box-shadow: 0 0 2px rgba(100,80,30,.5); display: flex; flex-direction: column; }
.vline { width: 1px; background: #ebebeb; }
.header { display: flex; align-items: center; height: 42px; padding-left: 11px; }
.brand { width: 21px; height: 21px; }
.header .vline { height: 30px; margin-left: 18px; }
.emblem { width: 28px; height: 28px; margin-left: 4px; border-radius: 50%; box-shadow: 0 1px 4px rgba(0,0,0,.15); }
.off { width: 35px; height: 19px; margin-left: 13px; border-radius: 3px; background: #d6dadb; font-size: 9px; line-height: 18px; text-align: center; }
.account { display: flex; align-items: center; margin-left: auto; padding-right: 14px; }
.user { width: 20px; height: 20px; }
.account .vline { margin-left: 16px; }
.usflag { width: 22px; height: 22px; margin-left: 14px; }
.balance { width: 63px; margin-left: 8px; font-size: 14px; font-weight: 700; letter-spacing: .5px; color: #4bb4b3; white-space: nowrap; }
.chev { width: 13px; height: 8px; margin-left: 16px; }
.deposit { width: 75px; height: 29px; margin-left: 22px; border-radius: 3px; background: #4533b1; color: #fff; font-weight: 700; }

.main { height: 652px; flex: none; background: #f2f3f5; }
.navrow { display: flex; height: 52px; padding: 16px 0 0 14px; }
.nav { display: flex; height: 45px; }
.nav a { display: flex; align-items: center; height: 45px; padding-left: 20px; width: 117px; }
.nav b { font-weight: 400; margin-left: 9px; letter-spacing: -.12px; white-space: nowrap; }
.nav .active { background: #fff; border-radius: 9px 9px 0 0; }
.nav .active b { font-weight: 700; margin-left: 10px; letter-spacing: 0; }
.nav a:nth-child(2) { width: 128px; } .nav a:nth-child(3) { width: 147px; } .nav a:nth-child(4) { width: 136px; }
.nav a:nth-child(5) { width: 99px; } .nav a:nth-child(6) { width: 113px; } .nav a:nth-child(7) { width: 135px; } .nav a:nth-child(8) { width: 124px; }
.nav a:nth-child(1) svg { width: 14px; height: 14px; } .nav a:nth-child(2) svg { width: 18px; height: 14px; } .nav a:nth-child(3) svg { width: 16px; height: 14px; }
.nav a:nth-child(4) svg { width: 14px; height: 16px; } .nav a:nth-child(5) svg { width: 16px; height: 16px; } .nav a:nth-child(6) svg { width: 18px; height: 14px; }
.nav a:nth-child(7) svg { width: 20px; height: 16px; } .nav a:nth-child(8) svg { width: 14px; height: 14px; }
.nav a:nth-child(3) b, .nav a:nth-child(5) b, .nav a:nth-child(7) b { margin-left: 8px; }
.nav a:nth-child(4) b { margin-left: 11px; }
.runner { display: flex; margin-left: 214px; width: 315px; height: 36px; position: relative; z-index: 1; }
.run { display: flex; align-items: center; width: 73px; padding-left: 14px; background: #b770e5; border-radius: 3px 0 0 3px; color: #fff; }
.run svg { width: 14px; height: 16px; }
.run b { margin-left: 7px; }
.status { width: 242px; padding: 7px 11px 0 10px; background: #fff; border: 1px solid #d6dadb; border-radius: 0 4px 4px 0; font-size: 11px; line-height: 14px; letter-spacing: .08px; text-align: center; }
.steps { display: flex; justify-content: space-between; align-items: center; height: 4px; margin-top: 5px; padding: 0 3px; border-radius: 2px; background: #d6dadb; }
.steps i { width: 2px; height: 2px; background: #333; }

.content { display: flex; justify-content: space-between; height: 593px; overflow: hidden; padding-right: 14px; }
.scrollbar { width: 7px; background: #d6dadb; }
.sheet { width: 1440px; padding-top: 9px; }
.subtabs { display: flex; height: 45px; padding-left: 32px; line-height: 43px; letter-spacing: -.05px; }
.subtabs a { width: 72px; }
.subtabs .on { width: 120px; padding-left: 18px; background: #fff; border-radius: 9px 9px 0 0; font-weight: 700; letter-spacing: .1px; }
.titlebar { display: flex; justify-content: space-between; align-items: center; height: 63px; padding: 0 7px 0 32px; }
h1 { font-size: 22px; line-height: 30px; font-weight: 700; letter-spacing: .26px; }
.connected { display: flex; align-items: center; width: 111px; height: 29px; padding-left: 16px; background: #b770e5; border-radius: 7px; color: #fff; letter-spacing: -.1px; }
.connected i { width: 14px; height: 14px; border-radius: 50%; background: #19c40f; border: 1px solid #153f18; }
.connected b { margin-left: 4px; }
.fields { display: flex; gap: 18px; padding-left: 32px; height: 80px; }
.fields label { display: flex; flex-direction: column; width: 160px; }
.fields label:nth-child(2) { width: 65px; }
.fields label:nth-child(3) { width: 161px; }
.fields span { height: 22px; line-height: 18px; font-weight: 500; white-space: nowrap; letter-spacing: -.05px; }
.fields em { height: 31px; padding-left: 11px; border: 1px solid #d6dadb; border-radius: 4px; background: #fff; line-height: 31px; letter-spacing: .08px; }

.cards { display: grid; grid-template-columns: repeat(3, 1fr); gap: 18px; width: 1394px; margin-left: 32px; }
.card { position: relative; display: flex; flex-direction: column; height: 440px; padding: 0 14px 0 15px; border: 1px solid #e0e0e0; border-radius: 6px; background: #fff; box-shadow: 2px 1px 8px rgba(0,0,0,.07); }
h2 { height: 43px; flex: none; border-bottom: 1px solid #e0e0e0; font-size: 14px; line-height: 45px; font-weight: 700; letter-spacing: .6px; margin-bottom: 12px; }
.stat { display: flex; justify-content: space-between; color: #000; height: 22px; line-height: 20px; }
.stat b { letter-spacing: .55px; margin-right: -.55px; }
.track { height: 7px; flex: none; margin-bottom: 13px; border-radius: 4px; background: #f0f0f0; overflow: hidden; }
.track i { display: block; height: 7px; border-radius: 4px; }
.up { background: #4caf50; } .down { background: #f44336; }
.caption { margin-top: -1px; height: 22px; font-size: 11px; line-height: 18px; color: #666; text-align: center; }
.digits { display: flex; justify-content: center; gap: 4px; margin-left: -2px; }
.digits b { width: 21.1px; height: 21px; border: 1px solid #f44336; border-radius: 3px; background: #ffebee; color: #c62828; font-size: 11.500px; line-height: 19px; text-align: center; }
.digits .e { border-color: #4caf50; background: #e8f5e9; color: #2e7d32; }
.recent { margin-top: 8px; height: 19px; background: #f8f9fa; border-radius: 3px; font-size: 11px; line-height: 19px; letter-spacing: .05px; color: #666; text-align: center; }
.streak { margin-top: 22px; height: 23px; background: #eff7fe; border-left: 2px solid #2196f3; border-radius: 3px; font-size: 11px; line-height: 23px; letter-spacing: .05px; color: #555; text-align: center; }
.cond { height: 102px; flex: none; margin: auto 0 61px; padding: 9px 11px; border: 1px solid #dee0e2; border-radius: 5px; background: #f8f9fb; font-size: 11.500px; color: #777; }
h3 { font-size: 13px; line-height: 18px; color: #333; margin-bottom: 5px; letter-spacing: .02px; }
.rule { display: flex; gap: 7px; height: 22px; line-height: 22px; }
.rule.then { margin-top: 7px; height: 21px; line-height: 21px; }
.if { width: 8px; } .th { width: 24px; white-space: nowrap; letter-spacing: -.3px; }
.rule em { border: 1px solid #ccc; border-radius: 3px; background: #fff; color: #333; line-height: 20px; text-align: center; width: 24px; }
.rule em.rise { width: 62px; } .rule em.even { width: 65px; } .rule em.num { width: 45px; padding-left: 7px; text-align: left; }
.rule.then em { line-height: 19px; } .rule.then em.rise { width: 59px; } .rule.then em.even { width: 61px; }

.footer { display: flex; align-items: center; height: 30px; padding: 0 0 2px 1085px; }
.footer .dot { width: 9px; height: 9px; border-radius: 50%; background: #b770e5; }
.footer .vline { height: 15px; margin-left: 15px; }
.time { width: 132px; margin-left: 15px; font-size: 11.500px; letter-spacing: .02px; white-space: nowrap; }
.tools { display: flex; gap: 14px; margin-left: 14px; }
.tools svg { width: 14.800px; height: 14.800px; }
.footer .tools + .vline { margin-left: 13px; }
.help { width: 15px; height: 15px; margin-left: 14px; }
.gb { width: 16px; height: 11px; margin: 1px 0 0 13px; }
.lang { margin: 1px 0 0 5px; width: 16px; font-size: 12.500px; }
.full { width: 13px; height: 13px; margin-left: 15px; }
.risk { position: absolute; left: 1349px; top: 666px; width: 180px; height: 31px; border-radius: 16px; background: linear-gradient(135deg, #ff6b35, #ff8c42); box-shadow: 0 3px 12px rgba(255,107,53,.3); color: #fff; font-weight: 700; line-height: 31px; text-align: center; letter-spacing: .05px; }

.taskbar { position: relative; display: flex; height: 23px; overflow: hidden; background: #1b2a2f; }
.start { width: 16px; height: 16px; margin: 12px 0 0 1px; }
.search { display: flex; width: 288px; height: 40px; margin-left: 16px; border: 1px solid #a8a8a8; background: #f1f1f1; }
.lens { width: 13px; height: 16px; margin: 11px 0 0 15px; }
.search span { width: 188px; margin-left: 11px; font: 15px/37px "Open Sans", "Noto Sans", sans-serif; letter-spacing: -.57px; color: #222; }
.spark { width: 42px; height: 18px; margin-top: 6px; overflow: visible; }
.apps { display: flex; gap: 25px; padding: 8px 0 0 13px; }
.apps svg { width: 24px; height: 24px; }
.running { display: block; margin: -8px -12px 0; padding: 8px 12px 0; background: #46555a; }
.apps svg:nth-child(n+2) { transform: translateX(1px); }
.tray { display: flex; padding: 12px 0 0 345px; }
.tray svg { width: 24px; height: 16px; }
.clock { width: 62px; margin: -8px 0 0 15px; font: 12px/16px "Open Sans", "Noto Sans", sans-serif; letter-spacing: -.2px; color: #fff; white-space: nowrap; }
.tray .notice { width: 22px; margin-left: 3px; overflow: visible; }
```
